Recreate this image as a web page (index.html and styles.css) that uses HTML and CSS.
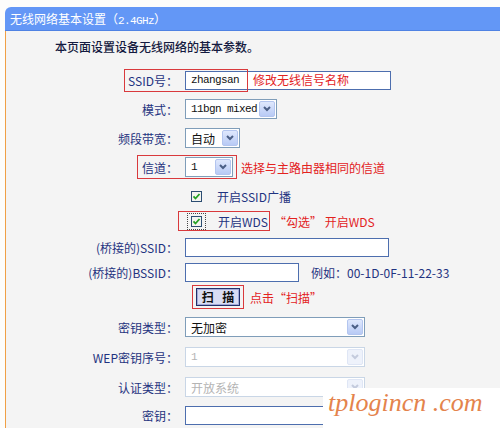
FILE: index.html
```html
<!DOCTYPE html>
<html lang="zh-CN">
<head>
    <meta charset="UTF-8">
    <title>无线网络基本设置</title>
    <link rel="stylesheet" href="styles.css">
</head>
<body>
    <div class="topgap"></div>
    <div class="title">无线网络基本设置（<span class="en">2.4GHz</span>）</div>
    <div class="panel">
        <p class="intro">本页面设置设备无线网络的基本参数。</p>

        <div class="row h28">
            <span class="label">SSID号：</span>
            <div class="field"><input class="text en w206" type="text" value="zhangsan"></div>
            <span class="mark mark-ssid"></span>
            <span class="note note-ssid">修改无线信号名称</span>
        </div>

        <div class="row h30">
            <span class="label">模式：</span>
            <div class="field">
                <div class="select w92"><span class="en">11bgn mixed</span><span class="arrow"><svg width="8" height="6" viewBox="0 0 8 6"><path d="M1 1l3 3 3-3"/></svg></span></div>
            </div>
        </div>

        <div class="row h28">
            <span class="label">频段带宽：</span>
            <div class="field">
                <div class="select w55"><span>自动</span><span class="arrow"><svg width="8" height="6" viewBox="0 0 8 6"><path d="M1 1l3 3 3-3"/></svg></span></div>
            </div>
        </div>

        <div class="row h30">
            <span class="label">信道：</span>
            <div class="field">
                <div class="select w48"><span class="en">1</span><span class="arrow"><svg width="8" height="6" viewBox="0 0 8 6"><path d="M1 1l3 3 3-3"/></svg></span></div>
                <span class="note gap8">选择与主路由器相同的信道</span>
            </div>
            <span class="mark mark-channel"></span>
        </div>

        <div class="row h28">
            <span class="label"></span>
            <div class="field cbfield">
                <svg class="cb" width="11" height="11" viewBox="0 0 11 11"><rect x="0.5" y="0.5" width="10" height="10"/><path d="M2.5 5.3l2 2.2 4-4.5"/></svg>
                <span class="cbtext">开启SSID广播</span>
            </div>
        </div>

        <div class="row h22">
            <span class="label"></span>
            <div class="field focusfield">
                <span class="focus"><svg class="cb" width="11" height="11" viewBox="0 0 11 11"><rect x="0.5" y="0.5" width="10" height="10"/><path d="M2.5 5.3l2 2.2 4-4.5"/></svg></span>
                <span class="cbtext2">开启WDS</span>
                <span class="note gap6">“勾选” 开启WDS</span>
            </div>
            <span class="mark mark-wds"></span>
        </div>

        <div class="row h30">
            <span class="label">(桥接的)SSID：</span>
            <div class="field"><input class="text w204" type="text" value=""></div>
        </div>

        <div class="row h20">
            <span class="label">(桥接的)BSSID：</span>
            <div class="field">
                <input class="text w114" type="text" value="">
                <span class="hint">例如：00-1D-0F-11-22-33</span>
            </div>
        </div>

        <div class="row h30">
            <span class="label"></span>
            <div class="field scanfield">
                <span class="btnbox"><button class="btn" type="button">扫&nbsp;描</button></span>
                <span class="note gap6">点击“扫描”</span>
            </div>
        </div>

        <div class="row h30">
            <span class="label">密钥类型：</span>
            <div class="field">
                <div class="select w180"><span>无加密</span><span class="arrow"><svg width="8" height="6" viewBox="0 0 8 6"><path d="M1 1l3 3 3-3"/></svg></span></div>
            </div>
        </div>

        <div class="row h30">
            <span class="label">WEP密钥序号：</span>
            <div class="field">
                <div class="select off w180"><span class="en">1</span><span class="arrow"><svg width="8" height="6" viewBox="0 0 8 6"><path d="M1 1l3 3 3-3"/></svg></span></div>
            </div>
        </div>

        <div class="row h30">
            <span class="label">认证类型：</span>
            <div class="field">
                <div class="select off w180"><span>开放系统</span><span class="arrow"><svg width="8" height="6" viewBox="0 0 8 6"><path d="M1 1l3 3 3-3"/></svg></span></div>
            </div>
        </div>

        <div class="row h26">
            <span class="label">密钥：</span>
            <div class="field"><input class="text w204" type="text" value=""></div>
        </div>
    </div>

    <div class="watermark">tplogincn .com</div>
</body>
</html>
```

FILE: styles.css
```css
body { margin: 0; width: 500px; height: 428px; overflow: hidden; position: relative; background: #fdfdfb; font: 12px "Noto Sans CJK SC", "Noto Sans", sans-serif; }
.en { font-family: "Liberation Mono", monospace; font-size: 11px; letter-spacing: -0.6px; }
.topgap { height: 7px; }
.title { margin-left: 5px; height: 23px; line-height: 23px; padding-left: 5px; background: #6397f6; border-bottom: 1px solid #4f82e3; border-radius: 6px 0 0 0; color: #fff; }
.intro { margin: 0; height: 35px; line-height: 32px; padding-left: 49px; color: #141a40; font-weight: 500; }
.panel { margin-left: 5px; border-left: 1px solid #f0a045; background: #f4f4f4; height: 397px; }

.row { position: relative; display: flex; align-items: center; }
.h20 { height: 20px; }
.h22 { height: 22px; }
.h26 { height: 26px; }
.h28 { height: 28px; }
.h30 { height: 30px; }
.label { flex: none; width: 172px; text-align: right; color: #1f3380; }
.field { margin-left: 7px; display: flex; align-items: center; white-space: nowrap; }

.text { box-sizing: border-box; height: 19px; margin: 0; padding: 0 5px; border: 1px solid #4d6eae; background: #fff; font: 12px "Noto Sans CJK SC", sans-serif; color: #111; outline: none; }
.text.en { font-family: "Liberation Mono", monospace; font-size: 11px; }
.w206 { width: 206px; }
.w204 { width: 204px; }
.w114 { width: 114px; }

.select { box-sizing: border-box; height: 20px; display: flex; align-items: center; justify-content: space-between; padding: 0 1px 0 5px; border: 1px solid #7f9db9; background: #fff; color: #111; white-space: nowrap; }
.w92 { width: 92px; }
.w55 { width: 55px; }
.w48 { width: 48px; }
.w180 { width: 180px; }
.arrow { flex: none; box-sizing: border-box; width: 16px; height: 16px; display: flex; align-items: center; justify-content: center; border: 1px solid #b3c5ef; border-radius: 2px; background: linear-gradient(#dfe8fd, #b8caf5); }
.arrow path { fill: none; stroke: #4b5f86; stroke-width: 2; }
.select.off { border-color: #c9d6e6; color: #b4b4b4; }
.select.off .arrow { background: #eef2fb; border-color: #dfe6f5; }
.select.off .arrow path { stroke: #c4cbdd; }

.cb { display: block; }
.cb rect { fill: #f3f4f0; stroke: #2c4d72; }
.cb path { fill: none; stroke: #22a022; stroke-width: 1.8; }
.cbfield { padding-left: 6px; }
.cbtext { margin-left: 15px; color: #1f3380; }
.focusfield { padding-left: 2px; }
.focus { padding: 2px 3px; border: 1px dotted #444; }
.cbtext2 { margin-left: 12px; color: #1f3380; }

.hint { margin-left: 12px; color: #1f3380; }
.scanfield { padding-left: 7px; }
.btnbox { display: flex; padding: 2px 3px; border: 1px solid #d9393c; }
.btn { box-sizing: border-box; width: 44px; height: 18px; margin: 0; padding: 0; border: 1px solid #22306a; box-shadow: inset 0 0 0 1px #a3abd9; background: #d9ddf3; font: bold 12px "Noto Sans CJK SC", sans-serif; line-height: 14px; letter-spacing: 3px; text-indent: 3px; color: #111; }

.note { color: #e3221e; white-space: nowrap; }
.gap6 { margin-left: 6px; }
.gap8 { margin-left: 8px; }
.note-ssid { position: absolute; left: 247px; top: 5px; line-height: 18px; }

.mark { position: absolute; box-sizing: border-box; border: 1px solid #d9393c; }
.mark-ssid { left: 118px; top: 3px; width: 124px; height: 23px; }
.mark-channel { left: 131px; top: 3px; width: 100px; height: 24px; }
.mark-wds { left: 172px; top: 1px; width: 92px; height: 20px; }

.watermark { position: absolute; left: 323px; top: 388px; width: 177px; height: 40px; box-sizing: border-box; padding-left: 5px; background: #fff; color: #e4834c; font: italic 26px "Liberation Serif", serif; line-height: 30px; }
```
